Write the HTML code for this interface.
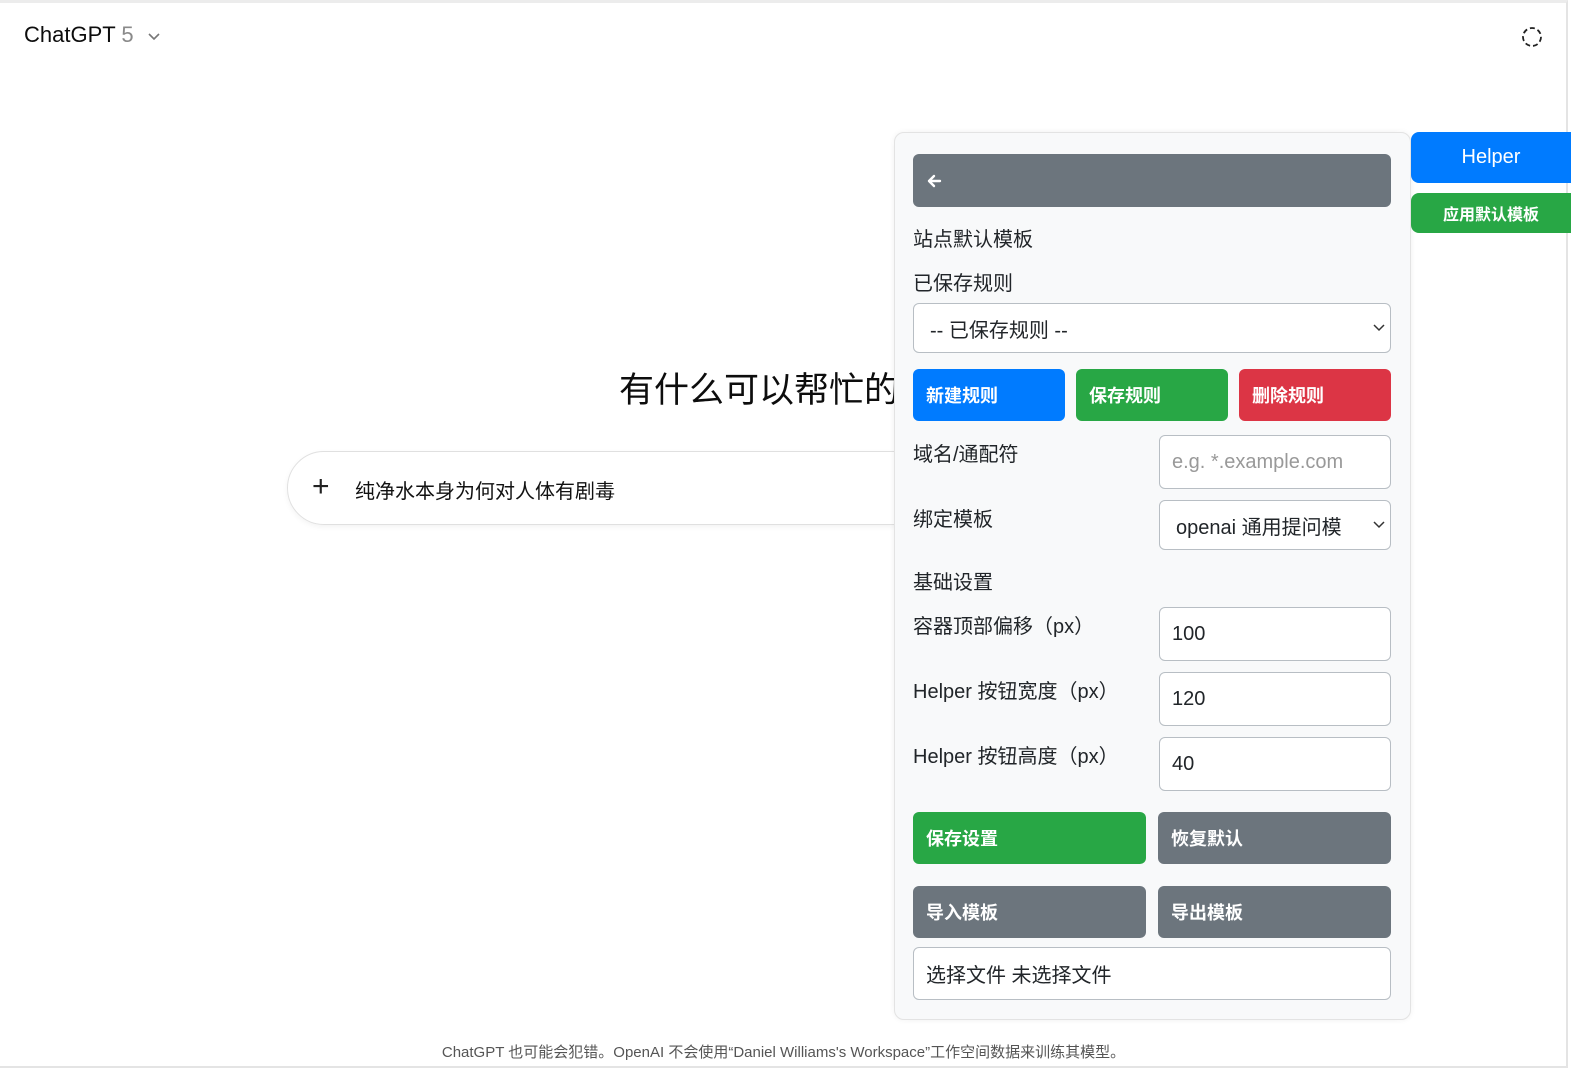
<!DOCTYPE html>
<html><head><meta charset="utf-8"><style>
*{box-sizing:border-box;margin:0;padding:0}
body{width:1587px;height:1080px;position:relative;overflow:hidden;background:#fff;font-family:"Liberation Sans","Noto Sans CJK SC",sans-serif;color:#212529}
.frame{position:absolute;left:0;top:0;width:1568px;height:1068px;border-top:3px solid #ececec;border-right:2px solid #e4e4e4;border-bottom:2px solid #e4e4e4}
.a{position:absolute}
.panel{left:894px;top:132px;width:517px;height:888px;background:#f8f9fa;border:1px solid #e3e3e3;border-radius:10px;box-shadow:0 0 6px rgba(0,0,0,.06)}
.lbl{font-size:20px;color:#212529}
.btn{position:absolute;border-radius:6px;color:#fff;font-weight:bold;font-size:18px;padding-left:13px;display:flex;align-items:center}
.inp{position:absolute;background:#fff;border:1px solid #b8bec4;border-radius:6px;font-size:20px;display:flex;align-items:center;padding-left:12px}
.g{background:#6c757d}.gr{background:#28a745}.b{background:#007bff}.r{background:#dc3545}
</style></head><body>
<div class="frame"></div>
<div class="a" style="left:24px;top:22px;font-size:22px;color:#0d0d0d">ChatGPT <span style="color:#8a8a8a">5</span></div>
<svg class="a" style="left:146px;top:30px" width="16" height="14" viewBox="0 0 16 14"><path d="M3 4l5 5 5-5" fill="none" stroke="#777" stroke-width="1.6"/></svg>
<svg class="a" style="left:1521px;top:26px" width="22" height="22" viewBox="0 0 22 22"><circle cx="11" cy="11" r="9" fill="none" stroke="#222" stroke-width="1.8" stroke-dasharray="5 3"/></svg>
<div class="a" style="left:619px;top:362px;font-size:35px;color:#0d0d0d">有什么可以帮忙的</div>
<div class="a" style="left:287px;top:451px;width:700px;height:74px;border:1px solid #e0e0e0;border-radius:37px;box-shadow:0 2px 6px rgba(0,0,0,.05)"></div>
<div class="a" style="left:312px;top:470px;font-size:30px;font-weight:300;color:#222">+</div>
<div class="a" style="left:355px;top:475px;font-size:20px;color:#111">纯净水本身为何对人体有剧毒</div>
<div class="a" style="left:0;width:1567px;top:1041px;text-align:center;font-size:15px;color:#555">ChatGPT 也可能会犯错。OpenAI 不会使用“Daniel Williams's Workspace”工作空间数据来训练其模型。</div>

<div class="a panel"></div>
<div class="btn g" style="left:913px;top:154px;width:478px;height:53px"><svg width="16" height="14" viewBox="0 0 16 14"><path d="M14 7H3M8 2L3 7l5 5" fill="none" stroke="#fff" stroke-width="2.4" stroke-linecap="round" stroke-linejoin="round"/></svg></div>
<div class="a lbl" style="left:913px;top:223px">站点默认模板</div>
<div class="a lbl" style="left:913px;top:267px">已保存规则</div>
<div class="inp" style="left:913px;top:303px;width:478px;height:50px;padding-left:16px">-- 已保存规则 --</div>
<svg class="a" style="left:1372px;top:322px" width="14" height="12"><path d="M2 3l5 5 5-5" fill="none" stroke="#333" stroke-width="1.5"/></svg>
<div class="btn b" style="left:913px;top:369px;width:152px;height:52px">新建规则</div>
<div class="btn gr" style="left:1076px;top:369px;width:152px;height:52px">保存规则</div>
<div class="btn r" style="left:1239px;top:369px;width:152px;height:52px">删除规则</div>
<div class="a lbl" style="left:913px;top:438px">域名/通配符</div>
<div class="inp" style="left:1159px;top:435px;width:232px;height:54px;color:#999">e.g. *.example.com</div>
<div class="a lbl" style="left:913px;top:503px">绑定模板</div>
<div class="inp" style="left:1159px;top:500px;width:232px;height:50px;padding-left:16px">openai 通用提问模</div>
<svg class="a" style="left:1372px;top:519px" width="14" height="12"><path d="M2 3l5 5 5-5" fill="none" stroke="#333" stroke-width="1.5"/></svg>
<div class="a lbl" style="left:913px;top:566px">基础设置</div>
<div class="a lbl" style="left:913px;top:610px">容器顶部偏移（px）</div>
<div class="inp" style="left:1159px;top:607px;width:232px;height:54px">100</div>
<div class="a lbl" style="left:913px;top:675px">Helper 按钮宽度（px）</div>
<div class="inp" style="left:1159px;top:672px;width:232px;height:54px">120</div>
<div class="a lbl" style="left:913px;top:740px">Helper 按钮高度（px）</div>
<div class="inp" style="left:1159px;top:737px;width:232px;height:54px">40</div>
<div class="btn gr" style="left:913px;top:812px;width:233px;height:52px">保存设置</div>
<div class="btn g" style="left:1158px;top:812px;width:233px;height:52px">恢复默认</div>
<div class="btn g" style="left:913px;top:886px;width:233px;height:52px">导入模板</div>
<div class="btn g" style="left:1158px;top:886px;width:233px;height:52px">导出模板</div>
<div class="inp" style="left:913px;top:947px;width:478px;height:53px">选择文件 未选择文件</div>

<div class="a" style="left:1411px;top:132px;width:160px;height:51px;background:#007bff;border-radius:8px 0 0 8px;color:#fff;font-size:20px;display:flex;align-items:center;justify-content:center">Helper</div>
<div class="a" style="left:1411px;top:193px;width:160px;height:40px;background:#28a745;border-radius:8px 0 0 8px;color:#fff;font-size:16px;font-weight:bold;display:flex;align-items:center;justify-content:center">应用默认模板</div>
</body></html>
